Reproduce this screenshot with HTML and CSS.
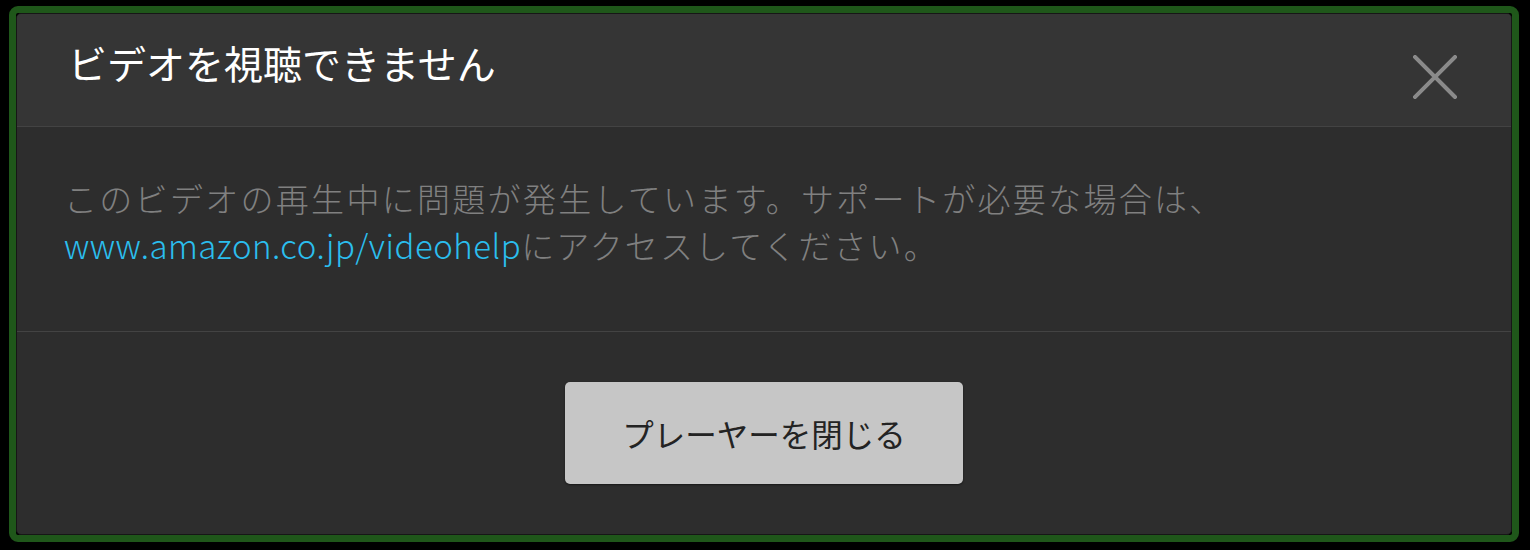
FILE: index.html
```html
<!DOCTYPE html>
<html lang="ja">
<head>
<meta charset="utf-8">
<link rel="stylesheet" href="styles.css">
</head>
<body>
<div class="frame">
  <div class="dialog">
    <div class="header">
      <h1 class="title">ビデオを視聴できません</h1>
      <svg class="close" width="44" height="44" viewBox="0 0 44 44" aria-label="閉じる">
        <path d="M2 2 L42 42 M42 2 L2 42" stroke="#8a8a8a" stroke-width="4" stroke-linecap="square" fill="none"/>
      </svg>
    </div>
    <div class="content">
      <p class="message">このビデオの再生中に問題が発生しています。サポートが必要な場合は、<br><a class="link" href="#">www.amazon.co.jp/videohelp</a><span class="tail">にアクセスしてください。</span></p>
    </div>
    <div class="footer">
      <button class="btn">プレーヤーを閉じる</button>
    </div>
  </div>
</div>
</body>
</html>
```

FILE: styles.css
```css
html, body {
  margin: 0;
  background: #000;
  height: 100%;
}
body {
  padding: 6px 11px 8px 9px;
  box-sizing: border-box;
  font-family: "Noto Sans CJK JP", "Noto Sans", sans-serif;
}
.frame {
  border: 7px solid #1f571a;
  border-radius: 9px;
  background: #000;
}
.dialog {
  border: 1px solid #161616;
  border-radius: 5px;
  overflow: hidden;
  background: #2d2d2d;
}
.header {
  height: 112px;
  background: #353535;
  border-bottom: 1px solid #434343;
  display: flex;
  align-items: center;
  justify-content: space-between;
  padding: 0 54px 0 51px;
  box-sizing: content-box;
}
.title {
  margin: 0 0 16px 0;
  font-size: 39px;
  font-weight: 400;
  color: #fff;
  line-height: 1;
}
.close {
  display: block;
  margin-top: 14px;
}
.content {
  height: 205px;
  border-bottom: 1px solid #434343;
  padding: 0 47px;
  box-sizing: border-box;
}
.message {
  margin: 0;
  padding-top: 48px;
  font-size: 33px;
  line-height: 47px;
  font-weight: 300;
  color: #808080;
  letter-spacing: 2.3px;
}
.link {
  color: #2bbeee;
  text-decoration: none;
  letter-spacing: 0.5px;
}
.tail {
  letter-spacing: 2.1px;
}
.footer {
  height: 202px;
  display: flex;
  align-items: center;
  justify-content: center;
}
.btn {
  width: 398px;
  height: 102px;
  background: #c6c6c6;
  border: none;
  border-radius: 5px;
  box-shadow: 0 1px 2px rgba(0,0,0,0.5);
  font-family: "Noto Sans CJK JP", "Noto Sans", sans-serif;
  font-size: 31.5px;
  color: #232323;
  padding: 0;
}
```
